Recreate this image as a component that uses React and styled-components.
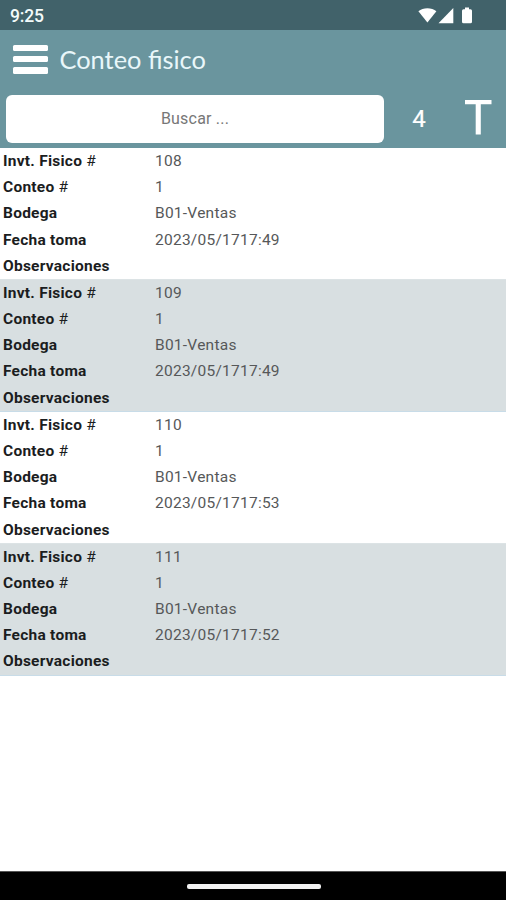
import React from "react";
import styled, { createGlobalStyle } from "styled-components";

const GlobalStyle = createGlobalStyle`
  * { box-sizing: border-box; }
  body { margin: 0; background: #fff; font-family: Roboto, sans-serif; }
`;

const Screen = styled.div`
  width: 100%;
  height: 900px;
  display: flex;
  flex-direction: column;
  overflow: hidden;
  background: #fff;
`;

const StatusBar = styled.div`
  height: 30px;
  flex: none;
  display: flex;
  align-items: center;
  justify-content: space-between;
  padding: 2px 32px 0 10px;
  background: #41626a;
  color: #f3fbfb;
`;

const Clock = styled.span`
  font-size: 17.5px;
  line-height: 28px;
  font-weight: 500;
  letter-spacing: -0.2px;
`;

const StatusIcons = styled.svg`
  display: block;
  width: 58px;
  height: 20px;
  fill: #fff;
`;

const Header = styled.header`
  height: 118px;
  flex: none;
  background: #6a959e;
  color: #fff;
`;

const TitleBar = styled.div`
  height: 65px;
  display: flex;
  align-items: center;
  padding: 0 12.5px 7px;
  gap: 12px;
`;

const MenuButton = styled.button`
  width: 35px;
  height: 29px;
  padding: 0;
  border: 0;
  background: none;
  display: flex;
  flex-direction: column;
  justify-content: space-between;
`;

const MenuLine = styled.span`
  width: 35px;
  height: 6.5px;
  border-radius: 1.5px;
  background: #fff;
`;

const Title = styled.h1`
  margin: 0;
  padding-bottom: 1px;
  font-family: Lato, sans-serif;
  font-size: 25.4px;
  line-height: 32px;
  font-weight: 400;
  color: #e9f7fa;
`;

const SearchBar = styled.div`
  display: grid;
  grid-template-columns: 378px 70px 48px;
  height: 48px;
  padding-left: 6px;
  align-items: center;
`;

const SearchInput = styled.input`
  width: 378px;
  height: 48px;
  padding: 0 0 2px;
  border: 0;
  border-radius: 6px;
  background: #fff;
  font: 400 16px Roboto, sans-serif;
  letter-spacing: 0.2px;
  text-align: center;
  outline: none;
  &::placeholder { color: #777; opacity: 1; }
`;

const Count = styled.span`
  text-align: center;
  font-size: 24px;
  line-height: 48px;
  -webkit-text-stroke: 0.2px #fff;
`;

const TextMode = styled.svg`
  display: block;
  justify-self: end;
  width: 37px;
  height: 48px;
  fill: #fff;
`;

const List = styled.main`
  flex: 1;
  min-height: 0;
`;

const Record = styled.section`
  height: 131.9px;
  background: ${(p) => (p.$shaded ? "#d8dfe1" : "#fff")};
  border-bottom: 1px solid ${(p) => (p.$shaded ? "#c8dce8" : "#dce3e5")};
`;

const Row = styled.div`
  display: grid;
  grid-template-columns: 152px 1fr;
  height: 26.18px;
  padding-left: 3px;
  align-items: center;
  line-height: 26px;
`;

const Label = styled.span`
  font-size: 15.5px;
  font-weight: 700;
  letter-spacing: 0.25px;
  color: #1b1d1e;
`;

const LabelSign = styled.span`
  font-weight: 400;
`;

const Value = styled.span`
  font-size: 15.5px;
  font-weight: 400;
  letter-spacing: 0.25px;
  color: #565859;
`;

const NavBar = styled.footer`
  height: 29px;
  flex: none;
  display: flex;
  align-items: center;
  justify-content: center;
  padding-left: 1px;
  background: #000;
  border-top: 1px solid #555;
`;

const HomeHandle = styled.span`
  width: 134px;
  height: 5px;
  border-radius: 2px;
  background: #f2f2f2;
`;

const records = [
  { id: "108", taken: "2023/05/1717:49" },
  { id: "109", taken: "2023/05/1717:49" },
  { id: "110", taken: "2023/05/1717:53" },
  { id: "111", taken: "2023/05/1717:52" },
];

function Field({ label, numbered, value }) {
  return (
    <Row>
      <Label>
        {label}
        {numbered && <LabelSign> #</LabelSign>}
      </Label>
      <Value>{value}</Value>
    </Row>
  );
}

export default function App() {
  return (
    <Screen>
      <GlobalStyle />
      <StatusBar>
        <Clock>9:25</Clock>
        <StatusIcons viewBox="0 0 58 20">
          <path d="M2.400 5.300C7 1.200 15.800 1.200 20.400 5.300L11.400 16.600Z" />
          <path d="M22.500 17.200L37.300 2V17.200Z" />
          <path d="M49 1.500H53V3.200H54.500Q56 3.200 56 4.700V15.700Q56 17.200 54.500 17.200H47.500Q46 17.200 46 15.700V4.700Q46 3.200 47.500 3.200H49Z" />
        </StatusIcons>
      </StatusBar>
      <Header>
        <TitleBar>
          <MenuButton aria-label="Menu">
            <MenuLine />
            <MenuLine />
            <MenuLine />
          </MenuButton>
          <Title>Conteo fisico</Title>
        </TitleBar>
        <SearchBar>
          <SearchInput placeholder="Buscar ..." />
          <Count>4</Count>
          <TextMode viewBox="0 0 37 48">
            <path d="M0 5H26.500V9.200H15.800V39.500H10.700V9.200H0Z" />
          </TextMode>
        </SearchBar>
      </Header>
      <List>
        {records.map((r, i) => (
          <Record key={r.id} $shaded={i % 2 === 1}>
            <Field label="Invt. Fisico" numbered value={r.id} />
            <Field label="Conteo" numbered value="1" />
            <Field label="Bodega" value="B01-Ventas" />
            <Field label="Fecha toma" value={r.taken} />
            <Field label="Observaciones" value="" />
          </Record>
        ))}
      </List>
      <NavBar>
        <HomeHandle />
      </NavBar>
    </Screen>
  );
}
